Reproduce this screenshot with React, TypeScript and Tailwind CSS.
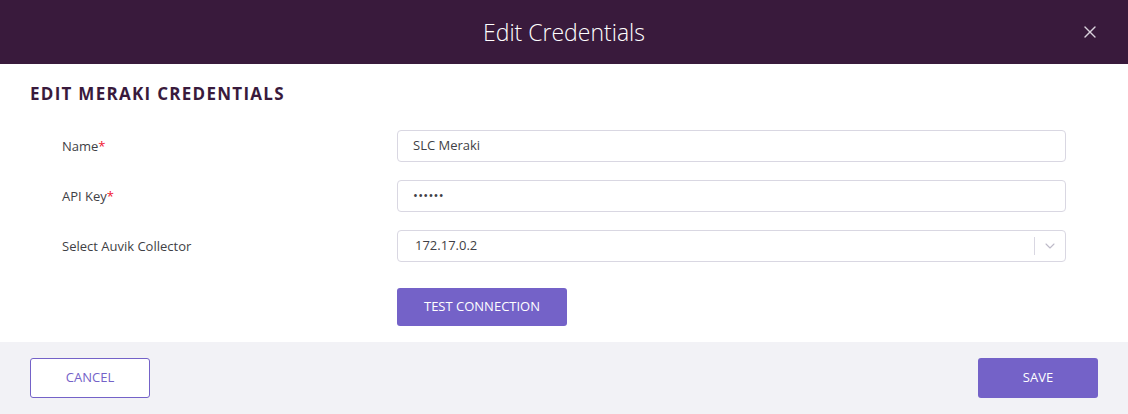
import { ChevronDown, X } from "lucide-react";

function Field({ label, required, children }: { label: string; required?: boolean; children: React.ReactNode }) {
  return (
    <div className="flex h-[32px] items-center">
      <div className="w-[367px] pl-[32px] pt-[2px] text-[13px] text-[#3f3f46]">
        {label}
        {required ? <span className="text-[#f0142f]">*</span> : null}
      </div>
      <div className="flex-1">{children}</div>
    </div>
  );
}

export default function App() {
  return (
    <div className="flex h-[414px] w-[1128px] flex-col bg-white font-['Open_Sans',sans-serif]">
      <div className="relative flex h-[64px] items-center justify-center bg-[#391a3c]">
        <h2 className="text-[23px] font-light text-white">Edit Credentials</h2>
        <button type="button" className="absolute right-[28px] top-[22px] text-[#d9d2dc]">
          <X size={20} strokeWidth={1.6} />
        </button>
      </div>

      <div className="flex-1 px-[30px] pt-[17px]">
        <h3 className="text-[17px] font-bold tracking-[0.075em] text-[#391a3c]">EDIT MERAKI CREDENTIALS</h3>

        <div className="mt-[23px] grid gap-[18px] pr-[32px]">
          <Field label="Name" required>
            <div className="flex h-[32px] items-center rounded-[4px] border border-[#d9d7e2] px-[15px] text-[13px] text-[#3f3f46]">
              SLC Meraki
            </div>
          </Field>
          <Field label="API Key" required>
            <div className="flex h-[32px] items-center rounded-[4px] border border-[#d9d7e2] px-[15px] text-[13px] tracking-[0.02em] text-[#3f3f46]">
              ••••••
            </div>
          </Field>
          <Field label="Select Auvik Collector">
            <div className="flex h-[32px] items-center rounded-[4px] border border-[#d9d7e2] pl-[17px] text-[13px] text-[#3f3f46]">
              <span className="flex-1">172.17.0.2</span>
              <span className="h-[18px] w-px bg-[#d9d7e2]" />
              <span className="flex w-[30px] items-center justify-center text-[#bdbac8]">
                <ChevronDown size={16} strokeWidth={1.6} />
              </span>
            </div>
          </Field>
        </div>

        <div className="mt-[26px] pl-[367px]">
          <button type="button" className="h-[38px] w-[170px] rounded-[3px] bg-[#7462c8] text-[13px] text-white">
            TEST CONNECTION
          </button>
        </div>
      </div>

      <div className="flex h-[72px] items-center justify-between bg-[#f2f2f6] px-[30px]">
        <button type="button" className="h-[40px] w-[120px] rounded-[3px] border border-[#7462c8] bg-white text-[13px] text-[#7462c8]">
          CANCEL
        </button>
        <button type="button" className="h-[40px] w-[120px] rounded-[3px] bg-[#7462c8] text-[13px] text-white">
          SAVE
        </button>
      </div>
    </div>
  );
}
